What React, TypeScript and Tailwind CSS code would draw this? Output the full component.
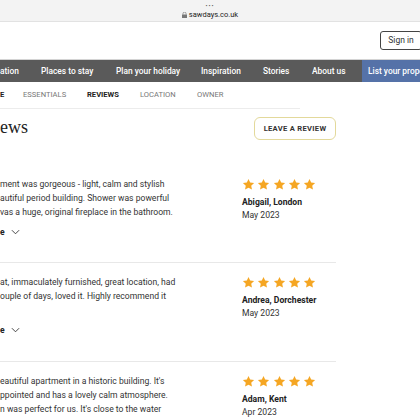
import React from "react";

const Star = () => (
  <svg width="13" height="13" viewBox="0 0 24 24" className="shrink-0">
    <path
      d="M12 1.8l3.1 6.6 7.2.9-5.3 5 1.4 7.1L12 17.9l-6.4 3.5 1.4-7.1-5.3-5 7.2-.9z"
      fill="#f5a623"
    />
  </svg>
);

const Chevron = () => (
  <svg width="9" height="6" viewBox="0 0 10 6" fill="none" stroke="#333" strokeWidth="1">
    <path d="M1 1l4 4 4-4" />
  </svg>
);

function Review({
  lines,
  name,
  date,
  more,
}: {
  lines: string[];
  name: string;
  date: string;
  more: boolean;
}) {
  return (
    <div>
      <div className="flex">
        <div className="w-[242px] shrink-0 text-[8.6px] leading-[14px] text-[#333]">
          {lines.map((l, i) => (
            <div key={i} className="whitespace-nowrap">{l}</div>
          ))}
        </div>
        <div className="flex flex-col pt-[1px]">
          <div className="flex gap-[2.3px]">
            <Star />
            <Star />
            <Star />
            <Star />
            <Star />
          </div>
          <div className="text-[8.6px] font-bold text-[#222] mt-[5px] leading-[13px]">{name}</div>
          <div className="text-[8.6px] text-[#333] leading-[13px]">{date}</div>
        </div>
      </div>
      {more && (
        <div className="flex items-center gap-[6px] text-[8.6px] font-bold text-[#222] mt-[3px] leading-[14px]">
          <span>e</span>
          <Chevron />
        </div>
      )}
    </div>
  );
}

export default function App() {
  return (
    <div className="w-[420px] h-[420px] overflow-hidden bg-white" style={{ fontFamily: "Roboto, 'Liberation Sans', sans-serif" }}>
      {/* browser bar */}
      <div className="h-[22px] bg-[#f3f3f3] border-b border-[#e2e2e2] flex flex-col items-center">
        <div className="text-[6px] leading-[6px] mt-[3px] text-[#555] tracking-[1px]">•••</div>
        <div className="text-[7.5px] leading-[10px] mt-[1px] text-[#222] flex items-center gap-[2px]">
          <svg width="5" height="6" viewBox="0 0 5 6"><rect x="0" y="2.5" width="5" height="3.5" fill="#777" /><path d="M1 2.5V1.6a1.5 1.5 0 013 0v.9" stroke="#777" strokeWidth="0.7" fill="none" /></svg>
          <span>sawdays.co.uk</span>
        </div>
      </div>
      {/* header */}
      <div className="h-[38px] flex items-center justify-end border-b border-[#d4d4d4]">
        <div className="w-[42px] h-[19px] -mr-[2px] border border-[#444] rounded-[3px] flex items-center justify-center text-[8.5px] text-[#333]">
          Sign in
        </div>
      </div>
      {/* nav */}
      <div className="h-[22px] bg-[#5a5a5a] flex items-center text-white text-[8.4px] font-medium">
        <div className="w-[362px] flex items-center h-full">
          <span className="w-[41px] shrink-0">ation</span>
          <span className="w-[75px] shrink-0">Places to stay</span>
          <span className="w-[85px] shrink-0">Plan your holiday</span>
          <span className="w-[62px] shrink-0">Inspiration</span>
          <span className="w-[49px] shrink-0">Stories</span>
          <span className="shrink-0">About us</span>
        </div>
        <div className="w-[58px] shrink-0 h-full bg-[#5572a8] flex items-center pl-[6px] whitespace-nowrap overflow-hidden">
          List your prope
        </div>
      </div>
      {/* tabs */}
      <div className="h-[27px] w-[300px] flex items-center text-[7.6px] uppercase border-b border-[#ececec]">
        <span className="w-[23px] font-bold text-[#222]">E</span>
        <span className="w-[64px] text-[#777]">Essentials</span>
        <span className="w-[53px] font-bold text-[#222]">Reviews</span>
        <span className="w-[57px] text-[#777]">Location</span>
        <span className="text-[#777]">Owner</span>
      </div>
      {/* reviews heading */}
      <div className="w-[336px] flex items-center justify-between mt-[8px]">
        <div className="text-[18px] leading-[22px] text-[#222] -mt-[4px]" style={{ fontFamily: "'Liberation Serif', 'DejaVu Serif', serif" }}>
          ews
        </div>
        <div className="w-[82px] h-[23px] border border-[#e3d99b] rounded-[6px] flex items-center justify-center text-[7.6px] font-bold tracking-[0.3px] text-[#333]">
          LEAVE A REVIEW
        </div>
      </div>
      {/* reviews */}
      <div className="w-[336px] mt-[37px]">
        <div className="border-b border-[#e8e8e8] pb-[23px]">
          <Review
            lines={[
              "ment was gorgeous - light, calm and stylish",
              "autiful period building. Shower was powerful",
              "vas a huge, original fireplace in the bathroom.",
            ]}
            name="Abigail, London"
            date="May 2023"
            more
          />
        </div>
        <div className="border-b border-[#e8e8e8] pb-[24px] pt-[12px]">
          <Review
            lines={[
              "at, immaculately furnished, great location, had",
              "ouple of days, loved it. Highly recommend it",
            ]}
            name="Andrea, Dorchester"
            date="May 2023"
            more
          />
        </div>
        <div className="pt-[12px]">
          <Review
            lines={[
              "eautiful apartment in a historic building. It's",
              "ppointed and has a lovely calm atmosphere.",
              "n was perfect for us. It's close to the water",
            ]}
            name="Adam, Kent"
            date="Apr 2023"
            more={false}
          />
        </div>
      </div>
    </div>
  );
}
